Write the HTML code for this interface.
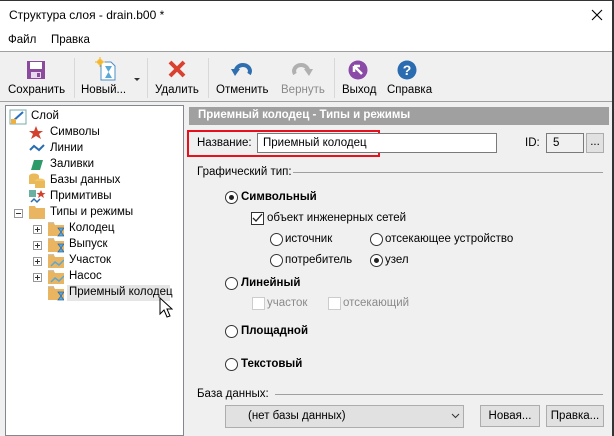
<!DOCTYPE html>
<html><head><meta charset="utf-8"><style>
*{margin:0;padding:0;box-sizing:border-box}
body{width:614px;height:436px;overflow:hidden;background:#f0f0f0;font-family:"Liberation Sans",sans-serif;font-size:11.5px;color:#000;position:relative}
.a{position:absolute;white-space:nowrap}
.b{font-weight:bold}
.rad{position:absolute;width:13px;height:13px;border:1px solid #333;border-radius:50%;background:#fff}
.rad.on::after{content:"";position:absolute;left:3px;top:3px;width:5px;height:5px;border-radius:50%;background:#222}
.chk{position:absolute;width:13px;height:13px;border:1px solid #333;background:#fff}
.chk.dis{border-color:#ccc}
.sep{position:absolute;top:58px;width:1px;height:40px;background:#d8d8d8}
.btn{position:absolute;background:#e1e1e1;border:1px solid #adadad;height:22px;text-align:center;line-height:20px}
</style></head><body>
<div class="a" style="left:0;top:0;width:614px;height:51px;background:#fff;border-top:1px solid #333"></div>
<div class="a" style="left:612px;top:0;width:2px;height:436px;background:#333"></div>
<div class="a" style="left:9px;top:8px;font-size:12px">Структура слоя - drain.b00 *</div>
<svg class="a" style="left:591px;top:9px" width="12" height="12"><path d="M1 1L11 11M11 1L1 11" stroke="#000" stroke-width="1.1"/></svg>
<div class="a" style="left:8px;top:34px">Файл</div>
<div class="a" style="left:51px;top:34px">Правка</div>
<div class="a" style="left:0;top:51px;width:612px;height:1px;background:#a0a0a0"></div>
<div class="a" style="left:0;top:101px;width:612px;height:1px;background:#a0a0a0"></div>
<div class="sep" style="left:74px"></div><div class="sep" style="left:147px"></div><div class="sep" style="left:208px"></div><div class="sep" style="left:334px"></div>
<svg class="a" style="left:26px;top:60px" width="20" height="20"><rect x="1" y="1" width="18" height="18" fill="#8c4a9e"/><rect x="4" y="2" width="12" height="7" fill="#fff"/><rect x="5" y="12" width="10" height="6" fill="#e8d8ee"/><rect x="11" y="13" width="3" height="4" fill="#8c4a9e"/></svg>
<svg class="a" style="left:95px;top:57px" width="22" height="24"><path d="M6 5h10l4 4v14H6z" fill="#fff" stroke="#4a90c8"/><path d="M10 9h7l-3.5 6 3.5 6h-7l3.5-6z" fill="#5aa8d8"/><circle cx="5" cy="5" r="3" fill="#f6c040"/><path d="M5 0v10M0 5h10" stroke="#f6b020"/></svg>
<svg class="a" style="left:134px;top:78px" width="6" height="4"><path d="M0 0h6L3 3z" fill="#333"/></svg>
<svg class="a" style="left:168px;top:60px" width="18" height="18"><path d="M2 2L16 16M16 2L2 16" stroke="#d9402f" stroke-width="4"/></svg>
<svg class="a" style="left:231px;top:60px" width="22" height="18"><path d="M5 12A7 6 0 1 1 18 14" fill="none" stroke="#2e6fb0" stroke-width="4"/><path d="M0 9l9 0-5 7z" fill="#2e6fb0"/></svg>
<svg class="a" style="left:291px;top:60px" width="22" height="18"><path d="M17 12A7 6 0 1 0 4 14" fill="none" stroke="#b0b0b0" stroke-width="4"/><path d="M22 9l-9 0 5 7z" fill="#b0b0b0"/></svg>
<svg class="a" style="left:348px;top:60px" width="20" height="20"><circle cx="10" cy="10" r="9.5" fill="#8c4aa8"/><path d="M6 6L14 14M6 6h6M6 6v6" stroke="#fff" stroke-width="2.5"/></svg>
<svg class="a" style="left:397px;top:60px" width="20" height="20"><circle cx="10" cy="10" r="9.5" fill="#2b6cb0"/><text x="10" y="15" text-anchor="middle" font-family="Liberation Sans" font-weight="bold" font-size="14" fill="#fff">?</text></svg>
<div class="a" style="left:8px;top:84px">Сохранить</div>
<div class="a" style="left:81px;top:84px">Новый...</div>
<div class="a" style="left:155px;top:84px">Удалить</div>
<div class="a" style="left:216px;top:84px">Отменить</div>
<div class="a" style="left:281px;top:84px;color:#8a8a8a">Вернуть</div>
<div class="a" style="left:342px;top:84px">Выход</div>
<div class="a" style="left:387px;top:84px">Справка</div>
<div class="a" style="left:5px;top:105px;width:179px;height:331px;background:#fff;border:1px solid #828790"></div>
<div class="a" style="left:67px;top:285px;width:103px;height:16px;background:#e5e5e5"></div>
<svg class="a" style="left:9px;top:109px" width="18" height="16"><rect x="1" y="1" width="16" height="14" fill="#fff" stroke="#7aa"/><path d="M3 13L14 3" stroke="#2a70c0" stroke-width="2"/><rect x="2" y="10" width="5" height="5" fill="#f0b040"/></svg>
<div class="a" style="left:31px;top:110px">Слой</div>
<svg class="a" style="left:29px;top:126px" width="14" height="14"><path d="M7 0l2 5h5l-4 3 2 5-5-3-5 3 2-5-4-3h5z" fill="#d2432f"/></svg>
<div class="a" style="left:50px;top:126px">Символы</div>
<svg class="a" style="left:29px;top:143px" width="16" height="10"><path d="M1 7l4-4 5 4 5-5" fill="none" stroke="#2a6cb0" stroke-width="2"/></svg>
<div class="a" style="left:50px;top:142px">Линии</div>
<svg class="a" style="left:30px;top:158px" width="14" height="14"><path d="M4 2h9l-3 10H1z" fill="#2e9a6a"/></svg>
<div class="a" style="left:50px;top:158px">Заливки</div>
<svg class="a" style="left:28px;top:173px" width="18" height="16"><ellipse cx="6" cy="3" rx="5" ry="2.5" fill="#e9b95a"/><rect x="1" y="3" width="10" height="8" fill="#e9b95a"/><ellipse cx="12" cy="8" rx="5" ry="2.5" fill="#f2c66a"/><rect x="7" y="8" width="10" height="7" fill="#e9b95a"/></svg>
<div class="a" style="left:50px;top:174px">Базы данных</div>
<svg class="a" style="left:28px;top:189px" width="18" height="16"><path d="M1 1h7v7H1z" fill="#6ab0a0"/><path d="M13 1l1.5 3h3l-2.5 2 1 3-3-2-3 2 1-3-2.5-2h3z" fill="#d2432f"/><path d="M3 13l3-3 3 3 3-3" fill="none" stroke="#2a6cb0" stroke-width="1.5"/></svg>
<div class="a" style="left:50px;top:190px">Примитивы</div>
<div class="a" style="left:14px;top:209px;width:9px;height:9px;border:1px solid #999;background:#fff"></div><div class="a" style="left:16px;top:213px;width:5px;height:1px;background:#333"></div>
<svg class="a" style="left:29px;top:205px" width="16" height="14"><path d="M0 1h6l1 2h9v11H0z" fill="#e9b560"/></svg>
<div class="a" style="left:50px;top:206px">Типы и режимы</div>
<svg width="0" height="0" style="position:absolute"><defs>
<g id="fh"><path d="M0 1h6l1 2h9v11H0z" fill="#e9b560"/><path d="M0 0h6" stroke="#888"/><path d="M10 6h6l-3 4 3 4h-6l3-4z" fill="#5aa8d8" stroke="#2a6cb0" stroke-width=".8"/></g>
<g id="fw"><path d="M0 1h6l1 2h9v11H0z" fill="#e9b560"/><path d="M0 0h6" stroke="#888"/><path d="M3 12l4-4 4 3 5-5" fill="none" stroke="#5aa8d8" stroke-width="1.5"/></g>
</defs></svg>
<div class="a" style="left:33px;top:225px;width:9px;height:9px;border:1px solid #999;background:#fff"></div><div class="a" style="left:35px;top:229px;width:5px;height:1px;background:#333"></div><div class="a" style="left:37px;top:227px;width:1px;height:5px;background:#333"></div>
<div class="a" style="left:33px;top:241px;width:9px;height:9px;border:1px solid #999;background:#fff"></div><div class="a" style="left:35px;top:245px;width:5px;height:1px;background:#333"></div><div class="a" style="left:37px;top:243px;width:1px;height:5px;background:#333"></div>
<div class="a" style="left:33px;top:257px;width:9px;height:9px;border:1px solid #999;background:#fff"></div><div class="a" style="left:35px;top:261px;width:5px;height:1px;background:#333"></div><div class="a" style="left:37px;top:259px;width:1px;height:5px;background:#333"></div>
<div class="a" style="left:33px;top:273px;width:9px;height:9px;border:1px solid #999;background:#fff"></div><div class="a" style="left:35px;top:277px;width:5px;height:1px;background:#333"></div><div class="a" style="left:37px;top:275px;width:1px;height:5px;background:#333"></div>
<svg class="a" style="left:48px;top:222px" width="16" height="15"><use href="#fh"/></svg>
<svg class="a" style="left:48px;top:238px" width="16" height="15"><use href="#fh"/></svg>
<svg class="a" style="left:48px;top:254px" width="16" height="15"><use href="#fw"/></svg>
<svg class="a" style="left:48px;top:270px" width="16" height="15"><use href="#fw"/></svg>
<svg class="a" style="left:48px;top:286px" width="16" height="15"><use href="#fh"/></svg>
<div class="a" style="left:69px;top:222px">Колодец</div>
<div class="a" style="left:69px;top:238px">Выпуск</div>
<div class="a" style="left:69px;top:254px">Участок</div>
<div class="a" style="left:69px;top:270px">Насос</div>
<div class="a" style="left:69px;top:286px">Приемный колодец</div>
<svg class="a" style="left:159px;top:297px" width="14" height="22"><path d="M1 1v16l4-4 3 7 3-1-3-7h5z" fill="#fff" stroke="#000"/></svg>
<div class="a" style="left:189px;top:107px;width:420px;height:18px;background:#a0a0a0;color:#fff;font-weight:bold;padding:2px 0 0 9px">Приемный колодец - Типы и режимы</div>
<div class="a" style="left:187px;top:130px;width:193px;height:27px;border:2px solid #e8101a"></div>
<div class="a" style="left:197px;top:137px">Название:</div>
<div class="a" style="left:257px;top:133px;width:240px;height:20px;background:#fff;border:1px solid #7a7a7a;padding:3px 0 0 5px">Приемный колодец</div>
<div class="a" style="left:525px;top:137px">ID:</div>
<div class="a" style="left:546px;top:133px;width:38px;height:20px;background:#f0f0f0;border:1px solid #7a7a7a;padding:3px 0 0 6px">5</div>
<div class="a" style="left:586px;top:133px;width:18px;height:20px;background:#e1e1e1;border:1px solid #adadad;text-align:center;line-height:16px">...</div>
<div class="a" style="left:197px;top:166px">Графический тип:</div>
<div class="a" style="left:293px;top:172px;width:310px;height:1px;background:#a0a0a0"></div>
<div class="rad on" style="left:225px;top:191px"></div><div class="a b" style="left:241px;top:191px">Символьный</div>
<div class="chk" style="left:251px;top:212px"></div><svg class="a" style="left:252px;top:213px" width="11" height="11"><path d="M1 5l3 3 6-7" fill="none" stroke="#222" stroke-width="1.3"/></svg>
<div class="a" style="left:267px;top:212px">объект инженерных сетей</div>
<div class="rad" style="left:270px;top:233px"></div><div class="a" style="left:285px;top:233px">источник</div>
<div class="rad" style="left:370px;top:233px"></div><div class="a" style="left:385px;top:233px">отсекающее устройство</div>
<div class="rad" style="left:270px;top:254px"></div><div class="a" style="left:285px;top:254px">потребитель</div>
<div class="rad on" style="left:370px;top:254px"></div><div class="a" style="left:385px;top:254px">узел</div>
<div class="rad" style="left:225px;top:277px"></div><div class="a b" style="left:241px;top:277px">Линейный</div>
<div class="chk dis" style="left:252px;top:297px"></div><div class="a" style="left:267px;top:297px;color:#8a8a8a">участок</div>
<div class="chk dis" style="left:328px;top:297px"></div><div class="a" style="left:343px;top:297px;color:#8a8a8a">отсекающий</div>
<div class="rad" style="left:225px;top:325px"></div><div class="a b" style="left:241px;top:325px">Площадной</div>
<div class="rad" style="left:225px;top:358px"></div><div class="a b" style="left:241px;top:358px">Текстовый</div>
<div class="a" style="left:197px;top:388px">База данных:</div>
<div class="a" style="left:275px;top:394px;width:328px;height:1px;background:#a0a0a0"></div>
<div class="a" style="left:225px;top:405px;width:239px;height:23px;background:#e1e1e1;border:1px solid #adadad;padding:4px 0 0 22px">(нет базы данных)</div>
<svg class="a" style="left:451px;top:413px" width="9" height="6"><path d="M1 1l3.5 3.5L8 1" fill="none" stroke="#333"/></svg>
<div class="btn" style="left:480px;top:405px;width:60px">Новая...</div>
<div class="btn" style="left:546px;top:405px;width:58px">Правка...</div>
</body></html>
